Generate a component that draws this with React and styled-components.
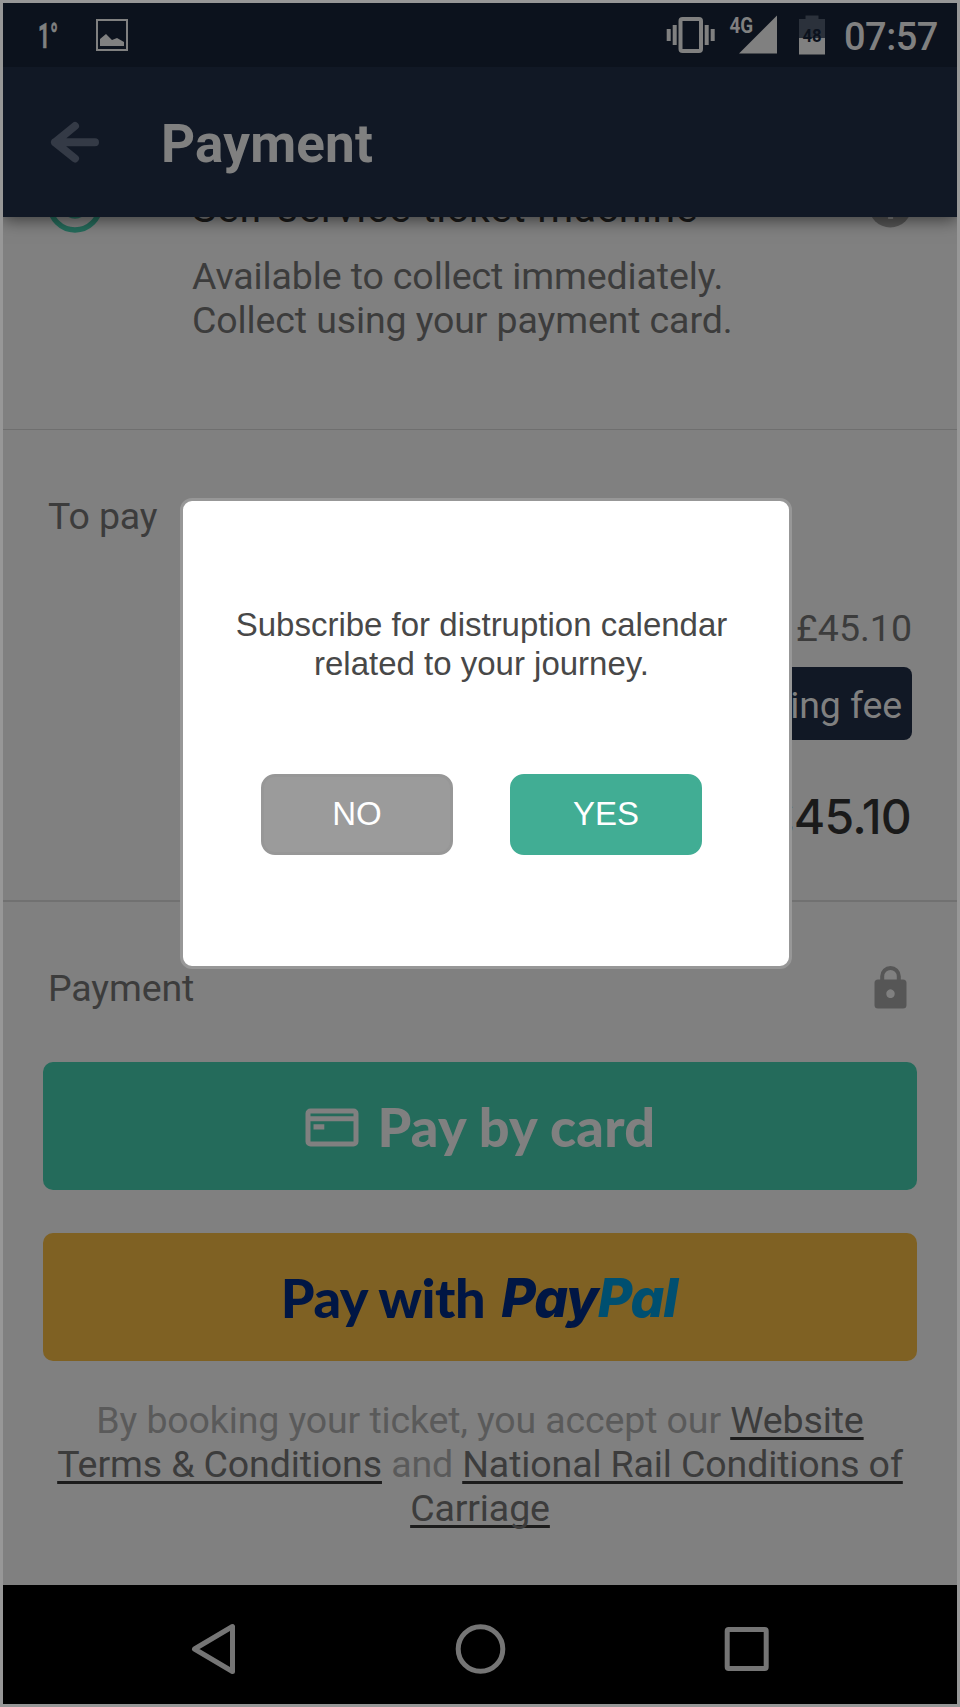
import React from "react";
import styled, { createGlobalStyle } from "styled-components";

const GlobalStyle = createGlobalStyle`
  * { box-sizing: border-box; }
  body { margin: 0; background: #979797; }
  svg { display: block; flex: none; overflow: visible; }
`;

const Screen = styled.main`
  position: relative;
  width: 960px;
  height: 1707px;
  border: 3px solid #979797;
  background: #808080;
  font-family: Roboto, "Liberation Sans", sans-serif;
  font-size: 37.5px;
  line-height: 44px;
  letter-spacing: -0.12px;
  color: #3c3c3c;
  display: flex;
  flex-direction: column;
  overflow: hidden;
`;

const StatusBar = styled.div`
  height: 64px;
  flex: none;
  background: #0c121d;
  color: #808080;
  display: flex;
  align-items: flex-start;
  justify-content: space-between;
  padding: 10px 18px 0 33px;
  position: relative;
  z-index: 2;
`;

const StatusGroup = styled.div`
  display: flex;
  gap: ${(p) => p.$gap}px;
`;

const Clock = styled.time`
  width: 97px;
  padding-left: 2px;
  font-weight: 500;
  font-size: 38px;
  line-height: 48px;
  letter-spacing: -0.5px;
`;

const Header = styled.header`
  height: 150px;
  flex: none;
  background: #111825;
  display: flex;
  align-items: center;
  padding-left: 46px;
  gap: 60px;
  position: relative;
  z-index: 1;
  box-shadow: 0 3px 16px rgba(0, 0, 0, 0.55);
`;

const Title = styled.h1`
  margin: 4px 0 0;
  font-size: 53px;
  line-height: 60px;
  font-weight: 700;
  color: #808080;
  letter-spacing: 0.2px;
`;

const Content = styled.div`
  height: 1368px;
  flex: none;
  overflow: hidden;
`;

const Delivery = styled.section`
  height: 213px;
  border-bottom: 1px solid #6f6f6f;
  display: flex;
  flex-direction: column;
`;

const DeliveryRow = styled.div`
  margin-top: -33px;
  height: 48px;
  flex: none;
  display: flex;
  align-items: center;
  padding: 0 45px 0 43px;
`;

const DeliveryTitle = styled.h2`
  margin: -1px auto 0 88px;
  font-size: 41px;
  line-height: 48px;
  font-weight: 400;
  color: #1a1a1a;
  white-space: nowrap;
  letter-spacing: 0.63px;
`;

const DeliveryNote = styled.p`
  margin: 23px 0 0 189px;
  line-height: 43.7px;
`;

const Summary = styled.section`
  height: 472px;
  padding: 64px 45px 0;
  border-bottom: 2px solid #717171;
  display: flex;
  flex-direction: column;
  align-items: flex-end;
`;

const Label = styled.h2`
  margin: 0;
  font-size: inherit;
  line-height: 45px;
  font-weight: 400;
  align-self: flex-start;
`;

const Subtotal = styled.div`
  margin-top: 67px;
  letter-spacing: 0;
`;

const FeeBadge = styled.div`
  margin-top: 17px;
  height: 73px;
  padding: 16px 10px 0;
  border-radius: 8px;
  background: #111825;
  color: #808080;
`;

const Total = styled.div`
  margin: 47px 1px 0 0;
  font-family: Inter, sans-serif;
  font-weight: 500;
  font-size: 48px;
  line-height: 60px;
  letter-spacing: -0.8px;
  color: #1a1a1a;
`;

const Checkout = styled.section`
  padding: 64px 40px 0;
`;

const CheckoutHead = styled.div`
  display: flex;
  justify-content: space-between;
  height: 96px;
  padding: 0 10px 0 5px;
`;

const PayButton = styled.button`
  width: 874px;
  height: 128px;
  border: 0;
  border-radius: 10px;
  margin: 0 0 43px;
  padding: 2px 0 0;
  display: flex;
  align-items: center;
  justify-content: center;
  gap: ${(p) => p.$gap}px;
  background: ${(p) => p.$bg};
  color: ${(p) => p.$ink};
  font-family: Lato, sans-serif;
  font-weight: 900;
  font-size: 54px;
  line-height: 64px;
  letter-spacing: ${(p) => p.$track}px;
  white-space: nowrap;
`;

const Brand = styled.span`
  font-family: Inter, sans-serif;
  font-size: 53px;
  font-style: italic;
  font-weight: 800;
  letter-spacing: -1.1px;
  margin-right: 2px;
  b { font-weight: inherit; color: #004f70; }
`;

const Terms = styled.p`
  margin: -5px -10px 0;
  text-align: center;
  line-height: 43.8px;
  color: #5a5a5a;
  white-space: nowrap;
`;

const TermsLink = styled.a`
  color: #3c3c3c;
  text-decoration: underline;
  text-decoration-color: #1c1c1c;
  text-decoration-thickness: 2.5px;
  text-underline-offset: 4px;
  text-decoration-skip-ink: none;
`;

const NavBar = styled.nav`
  height: 119px;
  flex: none;
  background: #000;
  display: flex;
  align-items: center;
  justify-content: space-between;
  padding: 9px 187px 0 188px;
`;

const Dialog = styled.div`
  position: absolute;
  z-index: 5;
  left: 177px;
  top: 495px;
  width: 612px;
  height: 471px;
  border: 3px solid #979797;
  border-radius: 12px;
  background: #fff;
  padding: 104px 9px 0 0;
  display: flex;
  flex-direction: column;
  align-items: center;
  font-family: "Liberation Sans", Arial, sans-serif;
  font-size: 33px;
  letter-spacing: 0;
`;

const Message = styled.p`
  margin: 0;
  text-align: center;
  line-height: 39px;
  color: #484848;
  white-space: nowrap;
`;

const Actions = styled.div`
  display: flex;
  gap: 57px;
  margin-top: 91px;
`;

const Choice = styled.button`
  width: 192px;
  height: 81px;
  padding: 0 0 2px;
  border: 3px solid ${(p) => p.$edge};
  border-radius: 14px;
  background: ${(p) => p.$bg};
  color: #fff;
  font: inherit;
`;

const Temperature = () => (
  <svg width="28" height="42" viewBox="36 13 28 42" fill="#808080">
    <text x="38" y="48" fontFamily="Roboto" fontWeight="700" fontSize="35" textLength="20" lengthAdjust="spacingAndGlyphs" stroke="#808080" strokeWidth="0.6">1°</text>
  </svg>
);

const PictureIcon = () => (
  <svg width="34" height="40" viewBox="95 13 34 40">
    <rect x="97" y="20" width="30" height="30" fill="none" stroke="#808080" strokeWidth="2" />
    <path d="M100 46V39L106 34L112 40L117 38L124 42V46Z" fill="#808080" />
  </svg>
);

const VibrateIcon = () => (
  <svg width="50" height="42" viewBox="666 13 50 42" fill="#808080">
    <rect x="680.5" y="19" width="20.5" height="32" rx="2" fill="none" stroke="#808080" strokeWidth="4" />
    <path d="M672.7 25h4v20h-4zM666.7 29h4v12h-4zM704.7 25h4v20h-4zM710.7 29h4v12h-4z" />
  </svg>
);

const SignalIcon = () => (
  <svg width="66" height="42" viewBox="727 13 66 42" fill="#808080">
    <path d="M739 53.5H777V15.5Z" />
    <text x="729.5" y="33" fontFamily="Roboto" fontWeight="700" fontSize="22" textLength="23.5" lengthAdjust="spacingAndGlyphs">4G</text>
  </svg>
);

const BatteryIcon = () => (
  <svg width="38" height="42" viewBox="793 13 38 42">
    <path d="M799 19H805.5V15.5H818.5V19H825V38H799Z" fill="#2b313b" />
    <path d="M799 38H825V54.5H799Z" fill="#808080" />
    <text x="802.5" y="42" fill="#0c121d" fontFamily="Roboto" fontWeight="700" fontSize="19" textLength="19" lengthAdjust="spacingAndGlyphs">48</text>
  </svg>
);

const BackIcon = () => (
  <svg width="52" height="44" viewBox="49 120 52 44" fill="none" stroke="#343a46" strokeWidth="8" strokeLinecap="round" strokeLinejoin="round">
    <path d="M95 142.3H55M75 126L55 142.3L75 158.5" />
  </svg>
);

const RadioIcon = () => (
  <svg width="58" height="58" viewBox="0 0 58 58" fill="none">
    <circle cx="29" cy="26" r="25" stroke="#256b5b" strokeWidth="5.4" />
    <circle cx="29" cy="26" r="13.7" fill="#256b5b" />
  </svg>
);

const InfoIcon = () => (
  <svg width="44" height="44" viewBox="0 0 44 44">
    <circle cx="22.3" cy="20" r="21.4" fill="#565656" />
    <path d="M20.1 18h5v15h-5zM20.1 9h5v5h-5z" fill="#808080" />
  </svg>
);

const LockIcon = () => (
  <svg width="33" height="44" viewBox="0 1 33 44">
    <path d="M8.2 16V11.3a8.3 8.3 0 0 1 16.6 0V16" fill="none" stroke="#565656" strokeWidth="4" />
    <path fillRule="evenodd" fill="#565656" d="M4 14.5H29a3.5 3.5 0 0 1 3.5 3.5V40a3.5 3.5 0 0 1-3.5 3.5H4A3.5 3.5 0 0 1 .5 40V18A3.5 3.5 0 0 1 4 14.5ZM16.5 24.3a4.2 4.4 0 1 0 .01 0Z" />
  </svg>
);

const CardIcon = () => (
  <svg width="54" height="39" viewBox="0 0 54 39" fill="#808080">
    <rect x="3" y="3" width="48" height="33" rx="2.5" fill="none" stroke="#808080" strokeWidth="5" />
    <path d="M4 8.3h46v4.9H4zM8.5 16.3h10.8v5.2H8.5z" />
  </svg>
);

const NavBack = () => (
  <svg width="46" height="52" viewBox="0 0 46 52" fill="none" stroke="#757575" strokeWidth="5" strokeLinejoin="round">
    <path d="M3.5 26L41.5 3.5V48.5Z" />
  </svg>
);

const NavHome = () => (
  <svg width="50" height="52" viewBox="0 0 50 52" fill="none" stroke="#757575" strokeWidth="5">
    <circle cx="24.5" cy="26" r="22.3" />
  </svg>
);

const NavRecent = () => (
  <svg width="46" height="52" viewBox="0 0 46 52" fill="none" stroke="#757575" strokeWidth="5">
    <rect x="3.2" y="6.5" width="39" height="39" rx="1.5" />
  </svg>
);

export default function App() {
  return (
    <>
      <GlobalStyle />
      <Screen>
        <StatusBar>
          <StatusGroup $gap={31}>
            <Temperature />
            <PictureIcon />
          </StatusGroup>
          <StatusGroup $gap={11}>
            <VibrateIcon />
            <StatusGroup $gap={0}>
              <SignalIcon />
              <BatteryIcon />
            </StatusGroup>
            <Clock>07:57</Clock>
          </StatusGroup>
        </StatusBar>
        <Header>
          <BackIcon />
          <Title>Payment</Title>
        </Header>
        <Content>
          <Delivery>
            <DeliveryRow>
              <RadioIcon />
              <DeliveryTitle>Self-service ticket machine</DeliveryTitle>
              <InfoIcon />
            </DeliveryRow>
            <DeliveryNote>
              Available to collect immediately.
              <br />
              Collect using your payment card.
            </DeliveryNote>
          </Delivery>
          <Summary>
            <Label>To pay</Label>
            <Subtotal>£45.10</Subtotal>
            <FeeBadge>No booking fee</FeeBadge>
            <Total>£45.10</Total>
          </Summary>
          <Checkout>
            <CheckoutHead>
              <Label>Payment</Label>
              <LockIcon />
            </CheckoutHead>
            <PayButton $bg="#246b5b" $ink="#808080" $gap={19} $track={0.3}>
              <CardIcon />
              <span>Pay by card</span>
            </PayButton>
            <PayButton $bg="#7f6123" $ink="#001644" $gap={16} $track={-0.4}>
              <span>Pay with</span>
              <Brand>Pay<b>Pal</b></Brand>
            </PayButton>
            <Terms>
              By booking your ticket, you accept our <TermsLink>Website</TermsLink>
              <br />
              <TermsLink>Terms &amp; Conditions</TermsLink> and <TermsLink>National Rail Conditions of</TermsLink>
              <br />
              <TermsLink>Carriage</TermsLink>
            </Terms>
          </Checkout>
        </Content>
        <NavBar>
          <NavBack />
          <NavHome />
          <NavRecent />
        </NavBar>
        <Dialog role="dialog">
          <Message>
            Subscribe for distruption calendar
            <br />
            related to your journey.
          </Message>
          <Actions>
            <Choice $bg="#9b9b9b" $edge="#979797">NO</Choice>
            <Choice $bg="#41ad94" $edge="#41ad94">YES</Choice>
          </Actions>
        </Dialog>
      </Screen>
    </>
  );
}
